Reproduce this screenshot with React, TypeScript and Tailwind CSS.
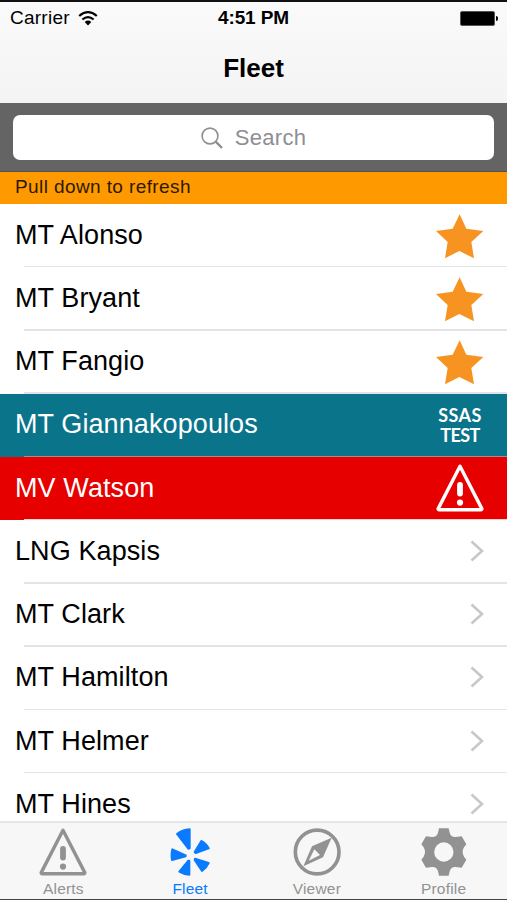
import { ReactNode } from 'react';
import clsx from 'clsx';

type Status = 'starred' | 'test' | 'alert' | 'normal';

const vessels: { name: string; status: Status }[] = [
  { name: 'MT Alonso', status: 'starred' },
  { name: 'MT Bryant', status: 'starred' },
  { name: 'MT Fangio', status: 'starred' },
  { name: 'MT Giannakopoulos', status: 'test' },
  { name: 'MV Watson', status: 'alert' },
  { name: 'LNG Kapsis', status: 'normal' },
  { name: 'MT Clark', status: 'normal' },
  { name: 'MT Hamilton', status: 'normal' },
  { name: 'MT Helmer', status: 'normal' },
  { name: 'MT Hines', status: 'normal' },
];

const StarIcon = () => (
  <svg className="mt-[3px] h-[45px] w-[48px]" viewBox="549 340 144 135" fill="#f79421">
    <path d="M620 341 L640 384 L691 391 L655 424 L663 473 L619 451 L576 473 L584 424 L549 391 L599 384 Z" />
  </svg>
);

const WarningIcon = () => (
  <svg className="h-12 w-12" viewBox="0 0 48 48" fill="none" stroke="currentColor" strokeLinejoin="round">
    <path d="M24 2.3 L45.8 44.6 Q46 45.8 44.8 45.8 H3.2 Q2 45.8 2.2 44.6 Z" strokeWidth="3.4" />
    <path d="M24 21 V29.5" strokeWidth="5.8" strokeLinecap="round" />
    <circle cx="24" cy="38.6" r="3.1" fill="currentColor" stroke="none" />
  </svg>
);

const ChevronIcon = () => (
  <svg className="h-[22px] w-[14px]" viewBox="0 0 14 22" fill="none" stroke="#c7c7cc" strokeWidth="2.6">
    <path d="M1.5 1.5 L12 11 L1.5 20.5" />
  </svg>
);

const FleetIcon = () => (
  <svg className="h-12 w-10" viewBox="510 144 120 144" fill="currentColor" stroke="currentColor" strokeWidth="6" strokeLinejoin="round">
    <path d="M531 162 Q546 150 569 148 V205 L565 206 Z" />
    <path d="M604 183 Q618 190 626 205 L587 219 L584 216 Z" />
    <path d="M517 208 L557 226 L557 229 L516 240 Q513 224 517 208 Z" />
    <path d="M585 236 L626 249 Q619 264 606 273 L584 240 Z" />
    <path d="M568 242 V284 Q551 283 538 275 L565 242 Z" />
  </svg>
);

const CompassIcon = () => (
  <svg className="h-12 w-12" viewBox="120 144 144 144" fill="none" stroke="currentColor">
    <circle cx="192.500" cy="216" r="65.500" strokeWidth="11" />
    <path d="M236 173 L210 232 L151 259 L177 199 Z" fill="currentColor" stroke="none" />
    <path d="M184 208 L201 225 L167 242 Z" fill="#f7f7f7" stroke="none" />
  </svg>
);

const GearIcon = () => (
  <svg className="h-12 w-[46px]" viewBox="502 144 138 144" fill="currentColor">
    <path
      fillRule="evenodd"
      d="M556 145 H585 L588 158 Q592 172 606 171 L624 169 L638 193 L631 202 Q623 216 631 230 L638 239 L624 263 L606 261 Q592 260 588 274 L585 287 H556 L553 274 Q549 260 535 261 L517 263 L503 239 L510 230 Q518 216 510 202 L503 193 L517 169 L535 171 Q549 172 553 158 Z M570.500 187 A29 29 0 1 0 570.500 245 A29 29 0 1 0 570.500 187 Z"
    />
  </svg>
);

const WifiIcon = () => (
  <svg className="ml-[8px] h-[15px] w-[20px]" viewBox="0 0 20 15" fill="none" stroke="#000" strokeWidth="2.2">
    <path d="M1.200 5 Q10 -2.600 18.800 5" />
    <path d="M4.400 8.500 Q10 3.600 15.600 8.500" />
    <path d="M6.700 10.900 Q10 8 13.300 10.900 L10 14.400 Z" fill="#000" stroke="none" />
  </svg>
);

const accessories: Record<Status, ReactNode> = {
  starred: <StarIcon />,
  alert: <WarningIcon />,
  normal: <ChevronIcon />,
  test: (
    <div className="mt-[2px] w-12 text-center font-['Lato','Liberation_Sans',sans-serif] text-[18px] leading-[20px] font-bold">
      <div className="tracking-[0.4px]">SSAS</div>
      <div className="tracking-[-0.6px]">TEST</div>
    </div>
  ),
};

const tabs = [
  { label: 'Alerts', icon: <WarningIcon /> },
  { label: 'Fleet', icon: <FleetIcon />, active: true },
  { label: 'Viewer', icon: <CompassIcon /> },
  { label: 'Profile', icon: <GearIcon /> },
];

function VesselRow({ name, status }: { name: string; status: Status }) {
  return (
    <div
      className={clsx(
        'relative flex h-[63.25px] shrink-0 items-center justify-between pr-[23px] pb-[2px] pl-[15px]',
        status === 'test' && 'bg-[#0a748b] text-white',
        status === 'alert' && 'bg-[#e60000] text-white',
        (status === 'starred' || status === 'normal') && 'bg-white text-black'
      )}
    >
      <span className="text-[27px] leading-8 tracking-[0.1px]">{name}</span>
      {accessories[status]}
      {/* hairline separator, inset like a native table cell */}
      <div
        className={clsx(
          'absolute right-0 bottom-0 left-6 h-[1.5px]',
          status === 'test' ? 'bg-[#a08e93]' : status === 'alert' ? 'bg-[#ffd0d0]' : 'bg-[#e4e4e6]'
        )}
      />
    </div>
  );
}

export default function App() {
  return (
    <div className="flex h-[900px] w-[507px] flex-col overflow-hidden border-t-2 border-b border-t-[#111] border-b-[#444] bg-white font-['Liberation_Sans',Arial,sans-serif]">
      <header className="h-[101px] shrink-0 bg-linear-to-b from-[#fafafa] to-[#f4f4f4] text-black">
        <div className="grid h-8 grid-cols-3 items-center text-[19px] leading-8">
          <div className="flex items-center pl-[10px]">
            <span className="tracking-[0.25px]">Carrier</span>
            <WifiIcon />
          </div>
          <div className="text-center font-bold tracking-[-0.1px]">4:51 PM</div>
          <div className="flex items-center justify-end pr-[9px]">
            <div className="h-[15px] w-[35px] rounded-[2px] border border-[#555] bg-black" />
            <div className="ml-px h-[5px] w-[2px] rounded-r-full bg-black" />
          </div>
        </div>
        <h1 className="mt-[18px] text-center text-[26px] leading-8 font-bold">Fleet</h1>
      </header>

      <div className="h-[69px] shrink-0 border-b border-[#565048] bg-[#646464] px-[13px] pt-3">
        <div className="flex h-[45px] items-center justify-center rounded-[7px] bg-white text-[#8e8e93]">
          <svg className="mr-[12px] h-[22px] w-[22px]" viewBox="0 0 22 22" fill="none" stroke="currentColor" strokeWidth="1.6">
            <circle cx="9" cy="9" r="7.900" />
            <path d="M14.700 14.700 L21 21" strokeWidth="2.400" />
          </svg>
          <span className="text-[22px] tracking-[0.3px]">Search</span>
        </div>
      </div>

      <div className="h-8 shrink-0 bg-[#ff9900] pl-[15px] text-[19px] leading-[30px] tracking-[0.4px] text-[#2b1a00]">
        Pull down to refresh
      </div>

      <main className="flex min-h-0 flex-1 flex-col overflow-hidden">
        {vessels.map((vessel) => (
          <VesselRow key={vessel.name} {...vessel} />
        ))}
      </main>

      <nav className="grid h-[78px] shrink-0 grid-cols-4 border-t-2 border-[#e6e6e6] bg-[#f7f7f7]">
        {tabs.map((tab) => (
          <button
            key={tab.label}
            className={clsx('flex flex-col items-center pt-[5px]', tab.active ? 'text-[#0a7aff]' : 'text-[#929292]')}
          >
            {tab.icon}
            <span className="mt-[4px] text-[15.5px] leading-[18px] tracking-[0.2px]">{tab.label}</span>
          </button>
        ))}
      </nav>
    </div>
  );
}
